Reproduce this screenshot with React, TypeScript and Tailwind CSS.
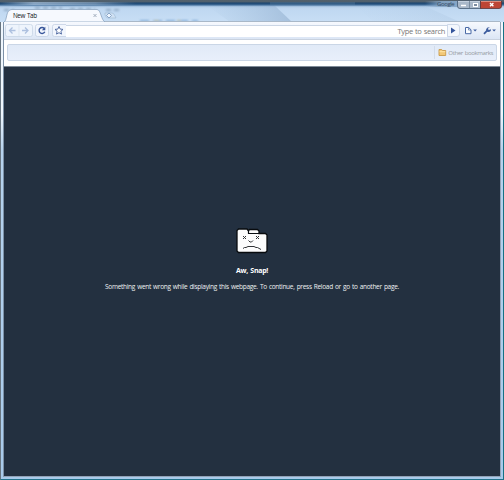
import React from "react";

function TitleBar() {
  return (
    <header className="relative h-[22px] shrink-0 overflow-hidden bg-linear-to-b from-[#8eb0d3] via-[#bfd8f1] via-40% to-[#c8def5]">
      <svg className="absolute inset-0" width="504" height="22" viewBox="0 0 504 22">
        <defs>
          <linearGradient id="edge" x1="0" x2="0" y1="0" y2="1">
            <stop offset="0" stopColor="#53616b" />
            <stop offset="0.25" stopColor="#50606d" />
            <stop offset="0.45" stopColor="#1b456f" />
            <stop offset="0.72" stopColor="#416d99" />
            <stop offset="1" stopColor="#8eb0d3" stopOpacity="0" />
          </linearGradient>
          <linearGradient id="sheen" x1="0" x2="1">
            <stop offset="0" stopColor="#a5c2df" stopOpacity="0" />
            <stop offset="1" stopColor="#9bb7d5" stopOpacity="0.75" />
          </linearGradient>
          <linearGradient id="light" x1="0" x2="1">
            <stop offset="0" stopColor="#c4dcf3" stopOpacity="0" />
            <stop offset="0.25" stopColor="#c7dcf2" stopOpacity="0.6" />
            <stop offset="0.7" stopColor="#c7dcf2" stopOpacity="0.4" />
            <stop offset="1" stopColor="#a3c1df" stopOpacity="0" />
          </linearGradient>
          <linearGradient id="glow" x1="0" x2="1">
            <stop offset="0" stopColor="#86a6c6" stopOpacity="0" />
            <stop offset="0.5" stopColor="#86a6c6" stopOpacity="0.9" />
            <stop offset="1" stopColor="#86a6c6" />
          </linearGradient>
          <filter id="soft"><feGaussianBlur stdDeviation="0.8" /></filter>
        </defs>
        <path d="M205 4H273L292 22H230Z" fill="url(#sheen)" />
        <path d="M353 4H420L460 22H374Z" fill="url(#sheen)" opacity=".3" />
        <rect width="504" height="7" fill="url(#edge)" />
        <rect y="2" width="136" height="3" fill="url(#light)" />
        <rect x="270" y="2" width="85" height="3" fill="#6087aa" opacity=".3" />
        <rect x="425" y="1" width="33" height="6" fill="url(#glow)" />
        <g filter="url(#soft)" opacity=".5">
          <path d="M4 10H14M35 8H62M70 9H95M106 10H122" stroke="#657f9a" strokeWidth="2" strokeDasharray="5 3" />
          <path d="M140 21H198" stroke="#4d87c2" strokeWidth="2" strokeDasharray="9 4" />
          <path d="M154 21H159M177 21H181" stroke="#a09a63" strokeWidth="2" />
        </g>
        <path d="M104 21.5H500" stroke="#a9b8c8" />
        <path d="M4 22C7 21 6 11 10 10Q11 9.5 12 9.5H97C101 9.5 101 20 105 22Z" fill="#f6f9fe" stroke="#8ba5c0" strokeWidth=".8" />
        <path d="M93.5 14L96.5 17M96.5 14L93.5 17" stroke="#8f9dae" strokeWidth=".8" />
        <path d="M105 13H112Q114 13 115 16L116 18H108Q106 18 105 15Z" fill="#d0e1f3" stroke="#9eb8d1" strokeWidth=".6" />
        <path d="M109 13L111.5 15.5L109 18L106.5 15.5Z" fill="#eef6ff" stroke="#7595bc" strokeWidth=".8" />
        <path d="M457.5 0V6Q457.5 8.5 460 8.5H481V0Z" fill="#a9b8c9" stroke="#445b73" strokeWidth=".8" />
        <path d="M480.5 0V8.5H499Q501.5 8.5 501.5 6V0Z" fill="#bd4535" stroke="#5a3437" strokeWidth=".8" />
        <path d="M458 1.5H480" stroke="#c4d0de" />
        <path d="M481 1.5H501" stroke="#dc8c7d" />
        <path d="M457 .5H502" stroke="#526171" />
        <path d="M469.5 1V8" stroke="#65788d" strokeWidth=".7" />
        <path d="M461 5.5H466" stroke="#fff" strokeWidth="1.5" />
        <rect x="473.5" y="3.5" width="4" height="3" fill="#7b8ca1" stroke="#fff" />
        <path d="M490 2.9L493.4 6.3M493.4 2.9L490 6.3" stroke="#fff" strokeWidth="1.4" />
      </svg>
      <span className="absolute top-[11px] left-[13px] font-['Open_Sans',sans-serif] text-[6.3px] leading-[9px] tracking-[-0.37px] [word-spacing:0.7px] whitespace-nowrap text-[#101319]">New Tab</span>
      <span className="absolute top-0 left-[437px] font-['Open_Sans',sans-serif] text-[6px] leading-[8px] tracking-[-0.4px] text-[#354b64]">Google</span>
    </header>
  );
}

function Toolbar() {
  return (
    <nav className="flex h-[18px] shrink-0 items-center border-b border-[#c9d2df] bg-linear-to-b from-[#f6f9fe] to-[#dce6f5] pl-px">
      <svg width="61" height="17" viewBox="5 22 61 17" className="shrink-0">
        <rect x="5.5" y="24.5" width="27" height="12" rx="2" fill="#eef4fc" stroke="#c8d5e6" strokeWidth=".8" />
        <path d="M19 25V36" stroke="#d6e0ed" strokeWidth=".7" />
        <path d="M15.5 30.5H9.5M12.5 27.5L9.5 30.5L12.5 33.5M22 30.5H28M25 27.5L28 30.5L25 33.5" fill="none" stroke="#adc0df" strokeWidth="1.3" />
        <rect x="35.5" y="24.5" width="13" height="12" rx="2" fill="#f2f6fd" stroke="#c4d1e3" strokeWidth=".8" />
        <path d="M44.3 28.4A3 3 0 1 0 44.8 31.8" fill="none" stroke="#38569a" strokeWidth="1.4" />
        <path d="M45.3 26.8V30.2H41.8Z" fill="#38569a" />
        <path d="M66 24.5H54.5Q52.5 24.5 52.5 26.5V34.5Q52.5 36.5 54.5 36.5H66" fill="#f2f6fd" stroke="#c4d1e3" strokeWidth=".8" />
        <path d="M59 26.5L60.2 29.1L63 29.4L60.9 31.3L61.5 34.1L59 32.7L56.5 34.1L57.1 31.3L55 29.4L57.8 29.1Z" fill="#fff" stroke="#435f9b" strokeWidth=".9" />
      </svg>
      <div className="flex h-3 flex-1 items-center justify-end border-t border-[#cbd6e5] bg-white pr-[2px] font-['Open_Sans',sans-serif] text-[7.5px] leading-[11px] tracking-[-0.32px] [word-spacing:0.5px] whitespace-nowrap text-[#777777]">Type to search</div>
      <svg width="53" height="17" viewBox="447 22 53 17" className="shrink-0">
        <path d="M447.5 24.5H457Q459.5 24.5 459.5 27V34Q459.5 36.5 457 36.5H447.5Z" fill="#f3f7fd" stroke="#c4d1e3" strokeWidth=".8" />
        <path d="M451 27.5L455.5 30.5L451 33.5Z" fill="#34559c" />
        <path d="M465.5 27.5H468.7L471 29.8V33.7H465.5Z" fill="#fafdff" stroke="#4968a5" />
        <path d="M468.5 27.5V30H471" fill="none" stroke="#4968a5" strokeWidth=".7" />
        <path d="M473.2 29.5H477L475.1 31.5ZM492.2 29.5H496L494.1 31.5Z" fill="#3d5d9f" />
        <path d="M484 33.8L487.6 30.2" stroke="#3d5d9f" strokeWidth="1.8" />
        <path d="M489.8 27.2L487.8 28.8L488.8 30L491 29.3Q491 32 488.5 32Q486 32 486.1 29.5Q486.5 27 489.8 27.2Z" fill="#3d5d9f" />
      </svg>
    </nav>
  );
}

function BookmarksBar() {
  return (
    <div className="h-[27px] shrink-0 border-b border-[#7e8a97] bg-white px-[3px] pt-1">
      <div className="flex h-[17px] items-center justify-end rounded-[2px] border border-[#cad6e6] bg-linear-to-b from-[#e1eaf7] to-[#e8effb] pr-[3px]">
        <svg width="14" height="15" viewBox="434 45 14 15">
          <path d="M434.5 46V59" stroke="#ced8e6" strokeWidth=".8" />
          <path d="M439 49.5H441.7L442.5 50.5H445.7V55.5H439Z" fill="#f2c878" stroke="#c99b49" strokeWidth=".9" />
          <path d="M439.5 51.7H445.3" stroke="#ffe5a5" />
        </svg>
        <span className="font-['Open_Sans',sans-serif] text-[6.1px] leading-[9px] tracking-[-0.4px] [word-spacing:0.6px] whitespace-nowrap text-[#969ba2]">Other bookmarks</span>
      </div>
    </div>
  );
}

function CrashPage() {
  return (
    <main className="flex min-h-0 flex-1 flex-col items-center bg-[#233040] pt-[161px] font-['Open_Sans',sans-serif] text-white">
      <svg width="32" height="27" viewBox="0 0 32 27">
        <path d="M2.5 1H11L12.5 3L13.5 1.5H21.5L23 3V5.5H29.5L31 7V23L29.5 24.5H2.5L1 23V2.5Z" fill="#fcfcfc" stroke="#080b0e" strokeWidth="1.3" />
        <path d="M12.5 2.5V5.5H23" fill="none" stroke="#090d11" strokeWidth="1.2" />
        <path d="M7 8L10 11M10 8L7 11M20 8L23 11M23 8L20 11M12.5 12.5L14 14H15.5L17 12.5M7 20.5L8.5 19.5H10L12 18.5H18L20 19.5H21.5L25 21.5" fill="none" stroke="#303235" strokeWidth="1" />
      </svg>
      <h1 className="mt-[11px] text-[7px] leading-[10px] font-bold tracking-[-0.26px] [word-spacing:0.8px] whitespace-nowrap">Aw, Snap!</h1>
      <p className="mt-[6px] text-[6.5px] leading-[10px] tracking-[-0.29px] [word-spacing:0.7px] whitespace-nowrap text-[#eef0f2]">Something went wrong while displaying this webpage. To continue, press Reload or go to another page.</p>
    </main>
  );
}

export default function App() {
  return (
    <div className="flex h-[480px] w-[504px] flex-col overflow-hidden bg-[#bcd5ed]">
      <TitleBar />
      <div className="flex min-h-0 flex-1 border-x border-b border-r-[#167184] border-b-[#22738b] border-l-[#687580] bg-linear-to-b from-[#eff6fd] from-20% via-[#b6d2ed] via-28% to-[#a8caeb] pr-[2px] pb-[2px] pl-[2px]">
        <div className="flex min-w-0 flex-1 flex-col border-x border-b border-[#92a2b6] border-l-[#7d91a7] bg-white">
          <Toolbar />
          <BookmarksBar />
          <CrashPage />
        </div>
      </div>
    </div>
  );
}
